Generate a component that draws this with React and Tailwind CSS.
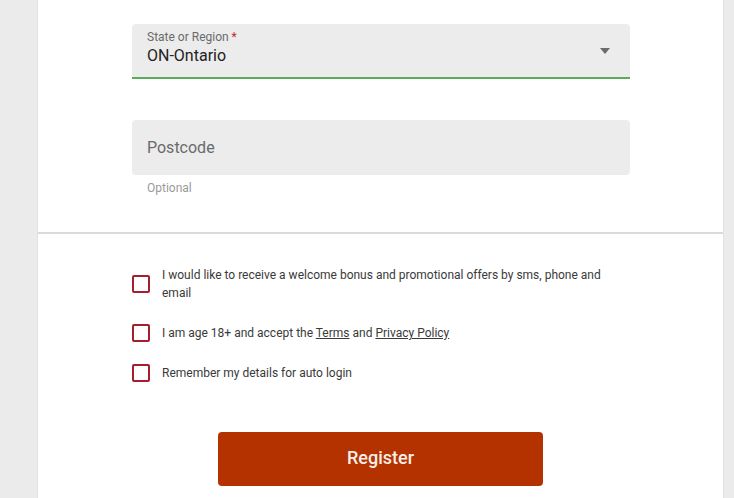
export default function App() {
  return (
    <div className="min-h-[498px] w-full bg-[#ebebeb] flex">
      <div className="ml-[37px] w-[687px] bg-white border-x border-[#e2e2e2] min-h-[498px] font-['Roboto',sans-serif] flex flex-col">
        <div className="pt-[24px] pb-[36px] pl-[94px] pr-[93px]">
          <div className="relative h-[55px] bg-[#ececec] rounded-t-[4px] border-b-2 border-[#5cab5c] pl-[15px] pt-[6px]">
            <div className="text-[12px] leading-[14px] text-[#6a6a6a]">
              State or Region <span className="text-[#c62828]">*</span>
            </div>
            <div className="text-[16px] leading-[24px] text-[#222]">ON-Ontario</div>
            <div className="absolute right-[20px] top-[24px] w-0 h-0 border-l-[5px] border-r-[5px] border-t-[6px] border-l-transparent border-r-transparent border-t-[#6b6b6b]" />
          </div>
          <div className="mt-[41px] h-[55px] bg-[#ececec] rounded-[4px] pl-[15px] flex items-center">
            <span className="text-[16px] text-[#6a6a6a]">Postcode</span>
          </div>
          <div className="pl-[15px] mt-[5px] text-[12px] leading-[16px] text-[#9a9a9a]">Optional</div>
        </div>
        <div className="h-[2px] bg-[#dadada]" />
        <div className="pt-[32px] pl-[94px] pr-[100px] flex flex-col">
          <div className="flex items-center gap-[12px]">
            <div className="w-[18px] h-[18px] shrink-0 border-2 border-[#a81d2d] rounded-[2px]" />
            <div className="text-[12px] leading-[18px] text-[#3a3a3a]">
              I would like to receive a welcome bonus and promotional offers by sms, phone and email
            </div>
          </div>
          <div className="flex items-center gap-[12px] mt-[22px]">
            <div className="w-[18px] h-[18px] shrink-0 border-2 border-[#a81d2d] rounded-[2px]" />
            <div className="text-[12px] leading-[18px] text-[#3a3a3a]">
              I am age 18+ and accept the <span className="underline">Terms</span> and <span className="underline">Privacy Policy</span>
            </div>
          </div>
          <div className="flex items-center gap-[12px] mt-[22px]">
            <div className="w-[18px] h-[18px] shrink-0 border-2 border-[#a81d2d] rounded-[2px]" />
            <div className="text-[12px] leading-[18px] text-[#3a3a3a]">Remember my details for auto login</div>
          </div>
        </div>
        <div className="mt-[50px] pl-[180px]">
          <div className="w-[325px] h-[54px] bg-[#b33200] rounded-[4px] flex items-center justify-center pb-[4px] text-[18px] font-medium text-[#fbeee8]">
            Register
          </div>
        </div>
      </div>
    </div>
  );
}
